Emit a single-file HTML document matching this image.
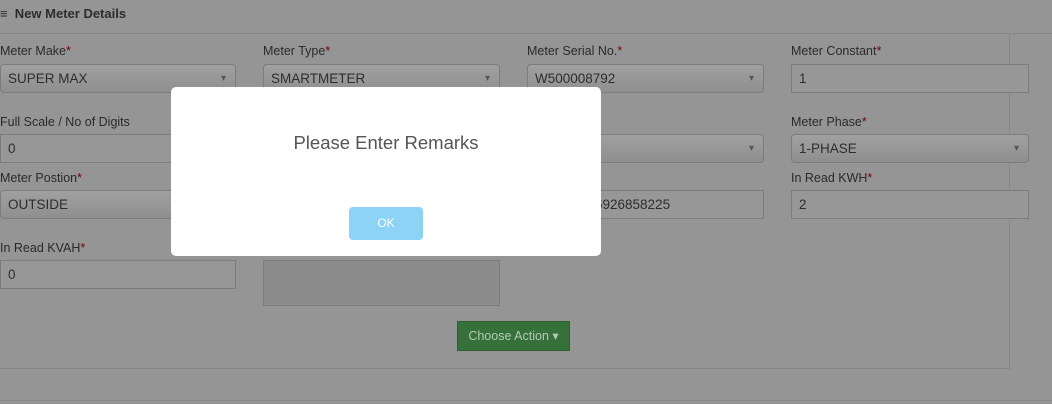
<!DOCTYPE html>
<html><head><style>
body{margin:0;width:1052px;height:404px;background:#959595;font-family:"Liberation Sans",sans-serif;position:relative;overflow:hidden;color:#2b2b2b}
.a{position:absolute}
.l{font-size:12.5px;color:#2a2a2a}
.l b{color:#7a0000;font-weight:normal}
.i{border:1px solid #7c7c7c;background:#979797;box-sizing:border-box;font-size:13.5px;padding-left:7px;line-height:27px;color:#2e2e2e}
.s{border-radius:4px;background:linear-gradient(#a0a0a0,#8f8f8f);padding-left:7px}
.s:after{content:"▾";position:absolute;right:9px;top:0;font-size:10px;color:#555}
</style></head><body>
<div class="a" style="left:0;top:6px;font-size:13px;font-weight:bold;color:#2d2d2d">≡&nbsp; New Meter Details</div>
<div class="a" style="left:0;top:33px;width:1052px;border-top:1px solid #878787"></div>
<div class="a" style="left:-2px;top:33px;width:1011px;height:335px;border-right:1px solid #878787;border-bottom:1px solid #878787"></div>
<div class="a" style="left:0;top:400px;width:1052px;border-top:1px solid #878787"></div>

<div class="a l" style="left:0;top:44px">Meter Make<b>*</b></div>
<div class="a i s" style="left:0;top:64px;width:236px;height:29px">SUPER MAX</div>
<div class="a l" style="left:263px;top:44px">Meter Type<b>*</b></div>
<div class="a i s" style="left:263px;top:64px;width:237px;height:29px">SMARTMETER</div>
<div class="a l" style="left:527px;top:44px">Meter Serial No.<b>*</b></div>
<div class="a i s" style="left:527px;top:64px;width:237px;height:29px">W500008792</div>
<div class="a l" style="left:791px;top:44px">Meter Constant<b>*</b></div>
<div class="a i" style="left:791px;top:64px;width:238px;height:29px">1</div>

<div class="a l" style="left:0;top:115px">Full Scale / No of Digits</div>
<div class="a i" style="left:0;top:134px;width:236px;height:29px">0</div>
<div class="a i s" style="left:527px;top:134px;width:237px;height:29px"></div>
<div class="a l" style="left:791px;top:115px">Meter Phase<b>*</b></div>
<div class="a i s" style="left:791px;top:134px;width:238px;height:29px">1-PHASE</div>

<div class="a l" style="left:0;top:171px">Meter Postion<b>*</b></div>
<div class="a i s" style="left:0;top:190px;width:236px;height:29px">OUTSIDE</div>
<div class="a i" style="left:527px;top:190px;width:237px;height:29px;padding-left:67px">6926858225</div>
<div class="a l" style="left:791px;top:171px">In Read KWH<b>*</b></div>
<div class="a i" style="left:791px;top:190px;width:238px;height:29px">2</div>

<div class="a l" style="left:0;top:241px">In Read KVAH<b>*</b></div>
<div class="a i" style="left:0;top:260px;width:236px;height:29px">0</div>
<div class="a i" style="left:263px;top:260px;width:237px;height:46px;background:#8c8c8c"></div>

<div class="a" style="left:457px;top:321px;width:113px;height:30px;background:#36703a;border:1px solid #2f5f2f;box-sizing:border-box;color:#b5c9b5;font-size:12.5px;text-align:center;line-height:28px">Choose Action ▾</div>

<div class="a" style="left:171px;top:87px;width:430px;height:169px;background:#fff;border-radius:5px">
<div style="position:absolute;top:45px;width:100%;text-align:center;font-size:18.5px;color:#555">Please Enter Remarks</div>
<div style="position:absolute;left:178px;top:120px;width:74px;height:33px;background:#8cd3f5;border-radius:4px;color:#fff;font-size:12px;text-align:center;line-height:33px">OK</div>
</div>
</body></html>
